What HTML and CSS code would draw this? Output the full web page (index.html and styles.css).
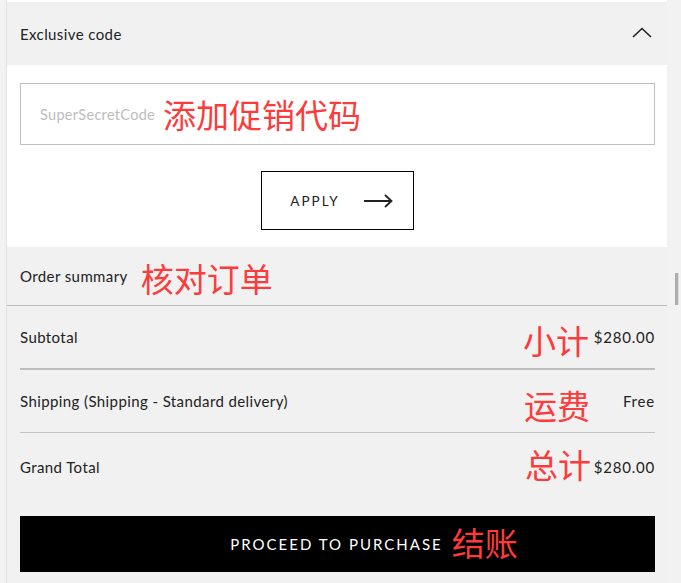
FILE: index.html
```html
<!DOCTYPE html>
<html lang="en">
<head>
<meta charset="utf-8">
<title>Checkout summary</title>
<link rel="stylesheet" href="styles.css">
</head>
<body>
<div class="panel">
  <div class="code-head">
    <span class="label">Exclusive code</span>
    <svg class="chevron" width="20" height="11" viewBox="0 0 20 11"><path d="M1 10 L10 1.5 L19 10" fill="none" stroke="#222" stroke-width="1.6"/></svg>
  </div>
  <div class="code-body">
    <div class="code-input">
      <span class="placeholder">SuperSecretCode</span>
      <span class="note">添加促销代码</span>
    </div>
    <button class="apply">
      <span>APPLY</span>
      <svg width="29" height="14" viewBox="0 0 29 14"><path d="M0 7 H27 M21 1 L27.5 7 L21 13" fill="none" stroke="#222" stroke-width="1.8"/></svg>
    </button>
  </div>
  <div class="summary">
    <div class="summary-head">
      <span class="label">Order summary</span>
      <span class="note note-sum">核对订单</span>
    </div>
    <div class="rows">
      <div class="row row-thick">
        <span class="label">Subtotal</span>
        <span class="value">$280.00</span>
        <span class="note row-note n1">小计</span>
      </div>
      <div class="row">
        <span class="label">Shipping (Shipping - Standard delivery)</span>
        <span class="value">Free</span>
        <span class="note row-note n2">运费</span>
      </div>
      <div class="row row-last">
        <span class="label">Grand Total</span>
        <span class="value">$280.00</span>
        <span class="note row-note n3">总计</span>
      </div>
      <button class="purchase"><span class="purchase-text">PROCEED TO PURCHASE<span class="note note-buy">结账</span></span></button>
    </div>
  </div>
</div>
<div class="scroll-thumb"></div>
</body>
</html>
```
FILE: styles.css
```css
html, body {
  margin: 0;
  padding: 0;
}
body {
  background: #f2f2f3;
  width: 681px;
  height: 583px;
  overflow: hidden;
  font-family: Lato, "Liberation Sans", sans-serif;
  color: #222;
}
.panel {
  margin-left: 6px;
  width: 660px;
  border-left: 1px solid #e2e2e2;
  background: #fff;
  padding-top: 2px;
}
.label {
  font-size: 15px;
  letter-spacing: 0.4px;
  color: #222;
}
.note {
  font-family: "Noto Sans CJK SC", sans-serif;
  color: #fd3b3b;
  font-size: 33px;
  line-height: 36px;
  letter-spacing: 0;
  white-space: nowrap;
}
.code-head {
  height: 63px;
  background: #f1f1f1;
  display: flex;
  align-items: center;
  justify-content: space-between;
  padding: 0 15px 0 13px;
}
.chevron {
  display: block;
  margin-top: -3px;
}
.code-body {
  background: #fff;
  padding: 18px 12px 17px 13px;
  display: flex;
  flex-direction: column;
  align-items: center;
}
.code-input {
  box-sizing: border-box;
  width: 100%;
  height: 62px;
  border: 1px solid #bfbfbf;
  display: flex;
  align-items: center;
  padding-left: 19px;
  gap: 8px;
}
.placeholder {
  color: #bdbdbd;
  font-size: 14.5px;
  letter-spacing: 0.3px;
}
.apply {
  box-sizing: border-box;
  margin-top: 26px;
  width: 153px;
  height: 59px;
  border: 1px solid #000;
  background: #fff;
  display: flex;
  align-items: center;
  justify-content: center;
  gap: 24px;
  padding: 0 0 0 8px;
  font-family: Lato, "Liberation Sans", sans-serif;
  font-size: 13.5px;
  letter-spacing: 2px;
  color: #222;
}
.apply svg {
  display: block;
}
.summary {
  background: #f1f1f1;
  padding-bottom: 11px;
}
.summary-head {
  height: 58px;
  border-bottom: 1px solid #bdbdbd;
  display: flex;
  align-items: center;
  padding-left: 13px;
  gap: 13px;
}
.note-sum {
  margin-top: 4px;
}
.rows {
  padding: 0 12px 0 13px;
}
.row {
  position: relative;
  height: 62px;
  display: flex;
  align-items: center;
  justify-content: space-between;
  border-bottom: 1px solid #c2c2c2;
}
.row-thick {
  border-bottom: 2px solid #bdbdbd;
}
.row-last {
  height: 68px;
  border-bottom: none;
}
.value {
  font-size: 15px;
  letter-spacing: 0.8px;
  color: #222;
}
.row-note {
  position: absolute;
  line-height: 36px;
}
.n1 { right: 66px; top: 16px; }
.n2 { right: 65px; top: 17px; }
.n3 { right: 64px; top: 13px; }
.purchase {
  margin-top: 15px;
  width: 100%;
  height: 56px;
  background: #000;
  border: none;
  display: flex;
  align-items: center;
  justify-content: center;
  padding: 0;
  font-family: Lato, "Liberation Sans", sans-serif;
}
.purchase-text {
  position: relative;
  color: #fff;
  font-size: 15px;
  letter-spacing: 2px;
  margin-left: -2px;
}
.note-buy {
  position: absolute;
  left: 100%;
  top: -11px;
  margin-left: 9px;
}
.scroll-thumb {
  position: fixed;
  left: 675px;
  top: 273px;
  width: 3px;
  height: 32px;
  background: #adadad;
  border-right: 1px solid #dedede;
}
```
